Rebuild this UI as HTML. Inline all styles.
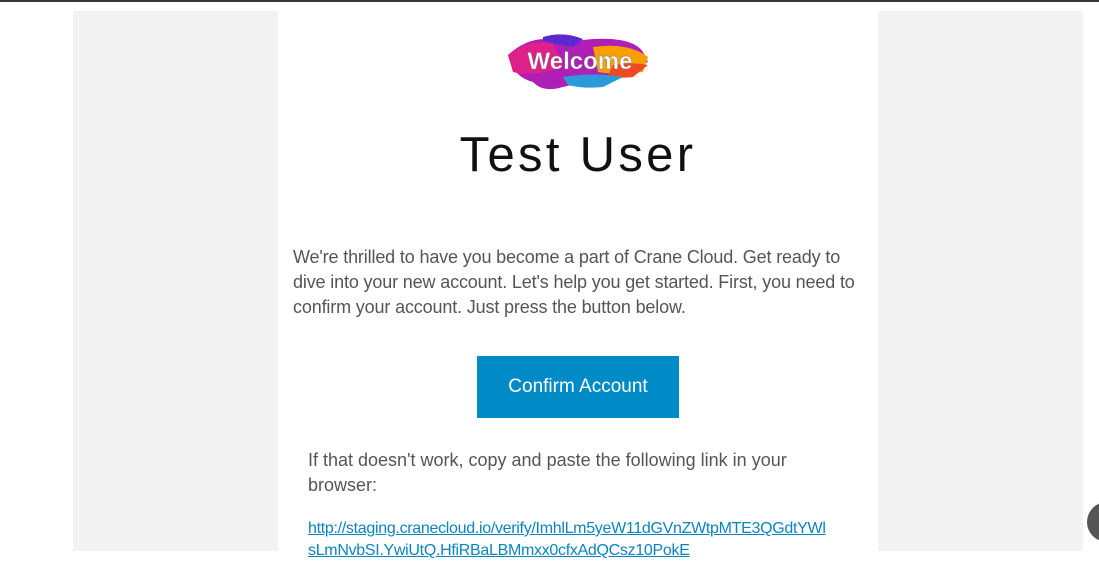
<!DOCTYPE html>
<html><head><meta charset="utf-8"><style>
html,body{margin:0;padding:0;width:1099px;height:551px;overflow:hidden;background:#fff;font-family:"Liberation Sans",sans-serif;}
.top{position:absolute;left:0;top:0;width:1099px;height:2px;background:#3a3630;}
.gray{position:absolute;left:73px;top:11px;width:1010px;height:540px;background:#f3f3f3;}
.card{position:absolute;left:278px;top:11px;width:600px;height:540px;background:#fff;}
h1{position:absolute;left:0;width:600px;top:116px;margin:0;text-align:center;font-weight:400;font-size:49px;letter-spacing:3.3px;color:#111;}
.p{position:absolute;left:15px;top:234px;width:574px;font-size:18px;line-height:25px;color:#555;letter-spacing:-0.15px;}
.btn{position:absolute;left:199px;top:345px;width:202px;height:62px;background:#008ac6;color:#fff;font-size:19px;line-height:62px;text-align:center;}
.p2{position:absolute;left:30px;top:437px;width:540px;font-size:18px;line-height:25px;color:#555;}
.link{position:absolute;left:30px;top:507px;width:522px;font-size:16px;line-height:22px;color:#0a85c0;text-decoration:underline;word-break:break-all;letter-spacing:-0.3px;}
.circ{position:absolute;left:1087px;top:502px;width:40px;height:40px;border-radius:50%;background:#555;}
</style></head><body>
<div class="top"></div>
<div class="gray"></div>
<div class="card">
<svg style="position:absolute;left:225px;top:16px" width="150" height="70" viewBox="0 0 150 70">
<path d="M5 28 Q30 5 60 15 L90 12 Q130 10 140 25 L145 35 Q120 45 95 52 L60 60 Q40 66 30 55 Q10 50 5 28Z" fill="#b01fb5"/>
<path d="M5 28 Q25 12 50 16 L60 40 Q30 50 10 45Z" fill="#e0208a"/>
<path d="M90 20 Q125 15 145 30 L140 45 Q110 48 95 45Z" fill="#f5a000"/>
<path d="M110 38 Q130 35 145 38 L130 50 Q115 52 105 48Z" fill="#f04a20"/>
<path d="M60 50 Q90 45 120 50 L100 60 Q80 62 65 58Z" fill="#2a9ad8"/>
<path d="M40 10 Q60 4 80 12 L70 20 Q55 18 40 14Z" fill="#5a2ad0"/>
<text x="77" y="42" text-anchor="middle" font-family="Liberation Sans" font-weight="700" font-size="24" fill="#fff" stroke="#777" stroke-width="0.4">Welcome</text>
</svg>
<h1>Test User</h1>
<div class="p">We're thrilled to have you become a part of Crane Cloud. Get ready to dive into your new account. Let's help you get started. First, you need to confirm your account. Just press the button below.</div>
<div class="btn">Confirm Account</div>
<div class="p2">If that doesn't work, copy and paste the following link in your browser:</div>
<div class="link">http://staging.cranecloud.io/verify/ImhlLm5yeW11dGVnZWtpMTE3QGdtYWlsLmNvbSI.YwiUtQ.HfiRBaLBMmxx0cfxAdQCsz10PokE</div>
</div>
<div class="circ"></div>
</body></html>
